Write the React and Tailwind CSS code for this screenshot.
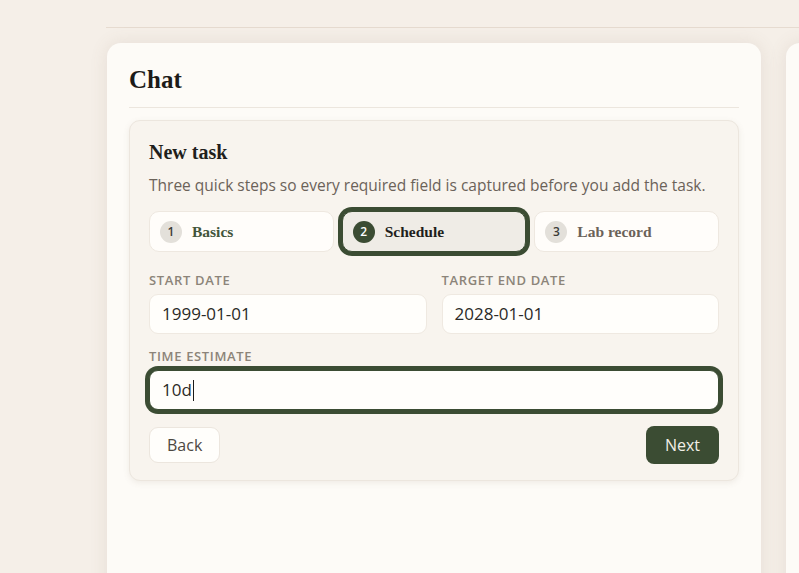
import React from 'react';

const serif = { fontFamily: '"Liberation Serif", "DejaVu Serif", serif' };

const steps = [
  { n: 1, label: 'Basics', state: 'done' },
  { n: 2, label: 'Schedule', state: 'active' },
  { n: 3, label: 'Lab record', state: 'todo' },
];

const Step = ({ n, label, state }) => {
  const active = state === 'active';
  return (
    <div
      className={
        'flex h-[41px] items-center gap-[10px] rounded-[10px] border px-[10px] ' +
        (active
          ? 'border-[#3b4c33] bg-[#efece6] ring-[4px] ring-[#3b4c33]'
          : 'border-[#eee8e0] bg-[#fffdfa]')
      }
    >
      <span
        className={
          'flex h-[22px] w-[22px] items-center justify-center rounded-full text-[12px] font-semibold ' +
          (active ? 'bg-[#3b4c33] text-white' : 'bg-[#e3e0da] text-[#3a3a36]')
        }
      >
        {n}
      </span>
      <span
        style={serif}
        className={
          'text-[15.5px] font-bold ' +
          (active ? 'text-[#1f1f1c]' : state === 'done' ? 'text-[#43553a]' : 'text-[#6b6259]')
        }
      >
        {label}
      </span>
    </div>
  );
};

const Label = ({ children }) => (
  <span className="text-[13px] font-semibold uppercase leading-[16px] tracking-[0.05em] text-[#8c8479]">
    {children}
  </span>
);

const Field = ({ label, value }) => (
  <div className="flex flex-col gap-[6px]">
    <Label>{label}</Label>
    <div className="flex h-[40px] items-center rounded-[9px] border border-[#efe9e1] bg-[#fffefb] px-[12px] text-[17px] text-[#2b2a27]">
      {value}
    </div>
  </div>
);

export default function App() {
  return (
    <div
      className="h-[573px] overflow-hidden bg-[#f5efe8] text-[#2b2a27]"
      style={{ fontFamily: '"Open Sans", Lato, sans-serif' }}
    >
      <div className="ml-[106px] h-[28px] border-b border-[#e6dbd0]" />
      <div className="flex gap-[25px] pl-[107px] pt-[15px]">
        <div className="h-[560px] w-[654px] shrink-0 rounded-t-[14px] bg-[#fdfbf7] px-[22px] pt-[22px] shadow-[0_0_18px_rgba(120,100,80,0.12)]">
          <h1 style={serif} className="text-[25px] font-bold leading-[30px] text-[#1c1b19]">
            Chat
          </h1>
          <div className="mt-[12px] border-b border-[#ece6de]" />
          <div className="mt-[12px] rounded-[11px] border border-[#ece6de] bg-[#f8f4ee] px-[19px] pb-[16px] pt-[19px] shadow-[0_2px_6px_rgba(120,100,80,0.10)]">
            <h2 style={serif} className="text-[20px] font-bold leading-[24px] text-[#1f1f1c]">
              New task
            </h2>
            <p className="mt-[10px] text-[15.5px] leading-[22px] text-[#6b6259]">
              Three quick steps so every required field is captured before you add the task.
            </p>
            <div className="mt-[15px] grid grid-cols-3 gap-[8px]">
              {steps.map((s) => (
                <Step key={s.n} {...s} />
              ))}
            </div>
            <div className="mt-[20px] grid grid-cols-2 gap-[15px]">
              <Field label="Start date" value="1999-01-01" />
              <Field label="Target end date" value="2028-01-01" />
            </div>
            <div className="mt-[14px] flex flex-col gap-[6px]">
              <Label>Time estimate</Label>
              <div className="flex h-[40px] items-center rounded-[9px] border border-[#3b4c33] bg-[#fffefb] px-[12px] text-[17px] text-[#2b2a27] ring-[4px] ring-[#3b4c33]">
                10d<span className="ml-[1px] h-[21px] w-[1.5px] bg-[#1c1b19]" />
              </div>
            </div>
            <div className="mt-[16px] flex items-center justify-between">
              <button className="h-[36px] rounded-[9px] border border-[#ece6de] bg-[#fffefb] px-[17px] text-[16px] text-[#4d4842]">
                Back
              </button>
              <button className="h-[38px] rounded-[8px] bg-[#3b4c33] px-[19px] text-[16px] text-[#f2efe6]">
                Next
              </button>
            </div>
          </div>
        </div>
        <div className="h-[560px] w-[200px] shrink-0 rounded-t-[14px] bg-[#fdfbf7] shadow-[0_0_18px_rgba(120,100,80,0.12)]" />
      </div>
    </div>
  );
}
